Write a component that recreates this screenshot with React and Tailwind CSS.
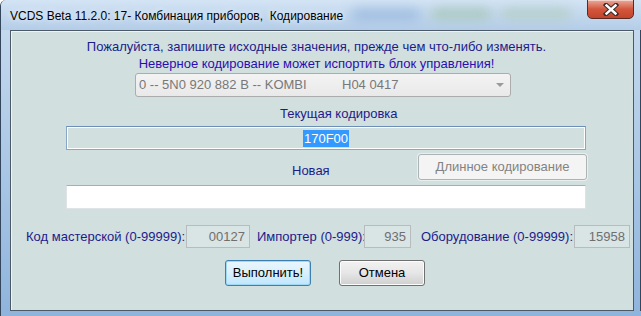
import React from 'react';

const font = "font-['Liberation_Sans',Arial,sans-serif]";

const FieldRow = () => (
    <div className="flex items-center mt-[16px] h-[23px] text-[13px] text-[#1c1c8a]">
        <span className="ml-[15px] w-[160px] whitespace-nowrap">Код мастерской (0-99999):</span>
        <div className="w-[64px] h-[23px] border border-[#b9bcbf] bg-[#d9e4e4] text-right pr-[4px] leading-[21px] text-[#6f6f6f]">00127</div>
        <span className="ml-[7px] w-[107px] whitespace-nowrap">Импортер (0-999):</span>
        <div className="w-[47px] h-[23px] border border-[#b9bcbf] bg-[#d9e4e4] text-right pr-[4px] leading-[21px] text-[#6f6f6f]">935</div>
        <span className="ml-[10px] w-[153px] whitespace-nowrap">Оборудование (0-99999):</span>
        <div className="w-[56px] h-[23px] border border-[#b9bcbf] bg-[#d9e4e4] text-right pr-[4px] leading-[21px] text-[#6f6f6f]">15958</div>
    </div>
);

export default function App() {
    return (
        <div className={`${font} w-[641px] h-[316px] flex flex-col overflow-hidden bg-gradient-to-b from-[#c9dcef] to-[#8fb4dc] border-l border-[#34465c] rounded-tl-[6px]`}>
            {/* Title bar */}
            <div className="relative h-[30px] flex items-start bg-gradient-to-b from-[#d3e4f4] via-[#c3d8ee] to-[#b4cde8]">
                <div className="absolute left-[350px] top-[9px] w-[70px] h-[12px] rounded-full bg-[#9fbde0] blur-[6px]" />
                <div className="absolute left-[430px] top-[9px] w-[60px] h-[10px] rounded-full bg-[#a7c6b8] blur-[6px]" />
                <div className="absolute left-[500px] top-[9px] w-[70px] h-[10px] rounded-full bg-[#b3cdc4] blur-[6px]" />
                <span className="relative ml-[9px] mt-[9px] text-[12px] leading-[15px] text-black whitespace-pre [text-shadow:0_0_6px_#ffffff]">
                    VCDS Beta 11.2.0: 17- Комбинация приборов,  Кодирование
                </span>
                <div className="relative ml-auto mr-[7px] w-[47px] h-[20px] -mt-px rounded-b-[5px] border border-[#5a2a24] bg-gradient-to-b from-[#e9a99a] via-[#d2573e] to-[#c3442a] flex items-center justify-center shadow-[inset_0_1px_0_rgba(255,255,255,0.5)]">
                    <svg width="16" height="13" viewBox="0 0 16 13">
                        <path d="M3 2 L13 11 M13 2 L3 11" stroke="#3b2a2a" strokeWidth="4.5" strokeLinecap="square" />
                        <path d="M3.5 2.5 L12.5 10.5 M12.5 2.5 L3.5 10.5" stroke="#ffffff" strokeWidth="2.4" strokeLinecap="square" />
                    </svg>
                </div>
            </div>

            <div className="flex h-[281px]">
                <div className="w-[9px]" />
                {/* Client area */}
                <div className="w-[624px] h-[281px] border border-[#4b5968] bg-[#d1dfdf] shadow-[inset_1px_1px_0_#eef4f4] flex flex-col">
                    <div className="pt-[7px] pr-[11px] text-center text-[13px] leading-[17px]">
                        <div className="text-[#1c1c8a]">Пожалуйста, запишите исходные значения, прежде чем что-либо изменять.</div>
                        <div className="text-[#2a0fb0]">Неверное кодирование может испортить блок управления!</div>
                    </div>

                    {/* Combobox */}
                    <div className="ml-[124px] mt-[1px] w-[376px] h-[24px] rounded-[3px] border border-[#acacac] bg-gradient-to-b from-[#f3f3f3] to-[#e9e9e9] flex items-center text-[13px] text-[#787878]">
                        <span className="ml-[3px] w-[203px] shrink-0 whitespace-nowrap">0 -- 5N0 920 882 B -- KOMBI</span>
                        <span>H04 0417</span>
                        <svg className="ml-auto mr-[6px]" width="8" height="5" viewBox="0 0 8 5">
                            <path d="M0 0 L8 0 L4 4 Z" fill="#9a9a9a" />
                        </svg>
                    </div>

                    <div className="mt-[8px] ml-[269px] text-[13px] leading-[17px] text-[#1c1c8a]">Текущая кодировка</div>

                    {/* Current coding */}
                    <div className="ml-[55px] mt-[4px] w-[520px] h-[24px] border border-[#87a7c8] border-t-[#6b8fb8] shadow-[inset_1px_1px_0_#ffffff,inset_-1px_-1px_0_#ffffff] flex items-center justify-center text-[13px]">
                        <span className="bg-[#3399ff] text-white px-px leading-[17px]">170F00</span>
                    </div>

                    <div className="flex items-center mt-[4px] h-[26px]">
                        <span className="ml-[281px] mt-[8px] text-[13px] text-[#1c1c8a]">Новая</span>
                        <div className="ml-auto mr-[46px] w-[169px] h-[26px] border border-[#adb2b5] rounded-[3px] bg-[#f4f4f4] shadow-[0_0_0_1px_#e9eeee] flex items-center justify-center text-[13px] text-[#838383]">
                            Длинное кодирование
                        </div>
                    </div>

                    {/* New coding */}
                    <div className="ml-[55px] mt-[5px] w-[520px] h-[24px] bg-white border border-[#dfe3e7] border-t-[#abadb3]" />

                    <FieldRow />

                    <div className="flex mt-[12px]">
                        <div className="ml-[214px] w-[86px] h-[26px] rounded-[3px] border border-[#3c7fb1] bg-gradient-to-b from-[#eaf6fd] via-[#d9f0fc] to-[#bee6fd] shadow-[inset_0_0_0_1px_#9fd8f5] flex items-center justify-center text-[13px] text-black">
                            Выполнить!
                        </div>
                        <div className="ml-[28px] w-[86px] h-[26px] rounded-[3px] border border-[#707070] bg-gradient-to-b from-[#f2f2f2] via-[#e6e6e6] to-[#cfcfcf] shadow-[inset_0_0_0_1px_#fcfcfc] flex items-center justify-center text-[13px] text-black">
                            Отмена
                        </div>
                    </div>
                </div>
                <div className="w-[7px] border-r border-[#34465c]" />
            </div>
        </div>
    );
}
